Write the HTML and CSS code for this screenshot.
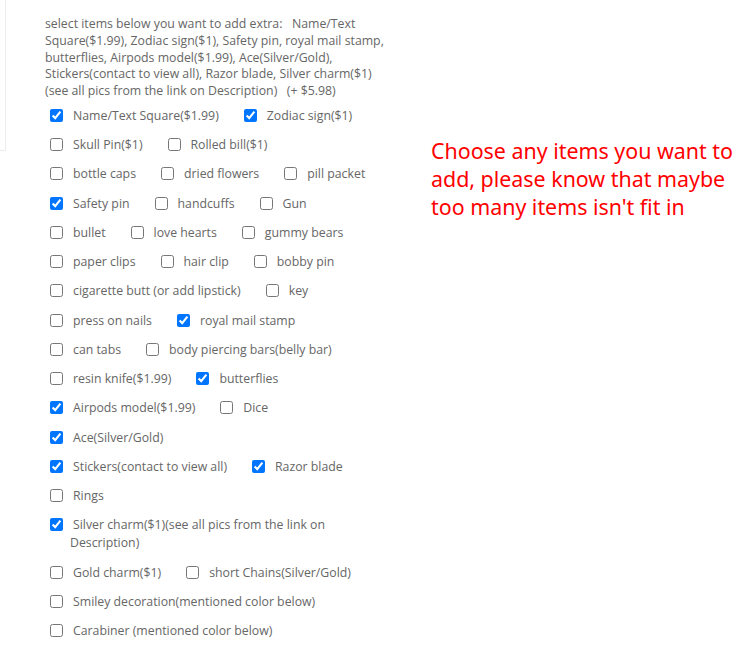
FILE: index.html
```html
<!DOCTYPE html>
<html lang="en">
<head>
    <meta charset="UTF-8">
    <meta name="viewport" content="width=device-width, initial-scale=1.0">
    <title>Extra items</title>
    <link rel="stylesheet" href="styles.css">
</head>
<body>
    <div class="page">
        <div class="side-edge"></div>

        <div class="options">
            <p class="intro">select items below you want to add extra:&nbsp;&nbsp; Name/Text Square($1.99), Zodiac sign($1), Safety pin, royal mail stamp, butterflies, Airpods model($1.99), Ace(Silver/Gold), Stickers(contact to view all), Razor blade, Silver charm($1) (see all pics from the link on Description)&nbsp;&nbsp; (+ $5.98)</p>

            <div class="opt-row"><label><input type="checkbox" checked>Name/Text Square($1.99)</label><label><input type="checkbox" checked>Zodiac sign($1)</label></div>
            <div class="opt-row"><label><input type="checkbox">Skull Pin($1)</label><label><input type="checkbox">Rolled bill($1)</label></div>
            <div class="opt-row"><label><input type="checkbox">bottle caps</label><label><input type="checkbox">dried flowers</label><label><input type="checkbox">pill packet</label></div>
            <div class="opt-row"><label><input type="checkbox" checked>Safety pin</label><label><input type="checkbox">handcuffs</label><label><input type="checkbox">Gun</label></div>
            <div class="opt-row"><label><input type="checkbox">bullet</label><label><input type="checkbox">love hearts</label><label><input type="checkbox">gummy bears</label></div>
            <div class="opt-row"><label><input type="checkbox">paper clips</label><label><input type="checkbox">hair clip</label><label><input type="checkbox">bobby pin</label></div>
            <div class="opt-row"><label><input type="checkbox">cigarette butt (or add lipstick)</label><label><input type="checkbox">key</label></div>
            <div class="opt-row"><label><input type="checkbox">press on nails</label><label><input type="checkbox" checked>royal mail stamp</label></div>
            <div class="opt-row"><label><input type="checkbox">can tabs</label><label><input type="checkbox">body piercing bars(belly bar)</label></div>
            <div class="opt-row"><label><input type="checkbox">resin knife($1.99)</label><label><input type="checkbox" checked>butterflies</label></div>
            <div class="opt-row"><label><input type="checkbox" checked>Airpods model($1.99)</label><label><input type="checkbox">Dice</label></div>
            <div class="opt-row"><label><input type="checkbox" checked>Ace(Silver/Gold)</label></div>
            <div class="opt-row"><label><input type="checkbox" checked>Stickers(contact to view all)</label><label><input type="checkbox" checked>Razor blade</label></div>
            <div class="opt-row"><label><input type="checkbox">Rings</label></div>
            <div class="opt-row long"><label><input type="checkbox" checked>Silver charm($1)(see all pics from the link on Description)</label></div>
            <div class="opt-row"><label><input type="checkbox">Gold charm($1)</label><label><input type="checkbox">short Chains(Silver/Gold)</label></div>
            <div class="opt-row"><label><input type="checkbox">Smiley decoration(mentioned color below)</label></div>
            <div class="opt-row"><label><input type="checkbox">Carabiner (mentioned color below)</label></div>
        </div>

        <div class="note">
            <p>Choose any items you want to add, please know that maybe too many items isn't fit in</p>
        </div>
    </div>
</body>
</html>
```

FILE: styles.css
```css
body {
    margin: 0;
    padding: 0;
    background-color: #fff;
    font-family: "Open Sans", "Noto Sans", sans-serif;
}

.page {
    display: flex;
    align-items: flex-start;
}

.side-edge {
    width: 5px;
    height: 150px;
    border-right: 1px solid #ececec;
    border-bottom: 1px solid #ececec;
    flex-shrink: 0;
}

.options {
    width: 345px;
    margin-left: 39px;
    padding-top: 16px;
    color: #666;
    font-size: 12.3px;
}

.intro {
    margin: 0 0 7px 0;
    line-height: 16.75px;
}

.opt-row {
    line-height: 18px;
    margin-bottom: 11.25px;
    padding-left: 25px;
    text-indent: -20px;
    white-space: nowrap;
}

.opt-row label {
    margin-right: 25px;
}

.opt-row label:last-child {
    margin-right: 0;
}

.opt-row.long {
    white-space: normal;
}

.opt-row input[type="checkbox"] {
    width: 13px;
    height: 13px;
    margin: 0 10px 0 0;
    vertical-align: -2px;
}

.note {
    width: 312px;
    margin-left: 41px;
    padding-top: 137px;
}

.note p {
    margin: 0;
    color: #ff0000;
    font-family: "Noto Sans", sans-serif;
    font-size: 21.4px;
    line-height: 28px;
}
```
